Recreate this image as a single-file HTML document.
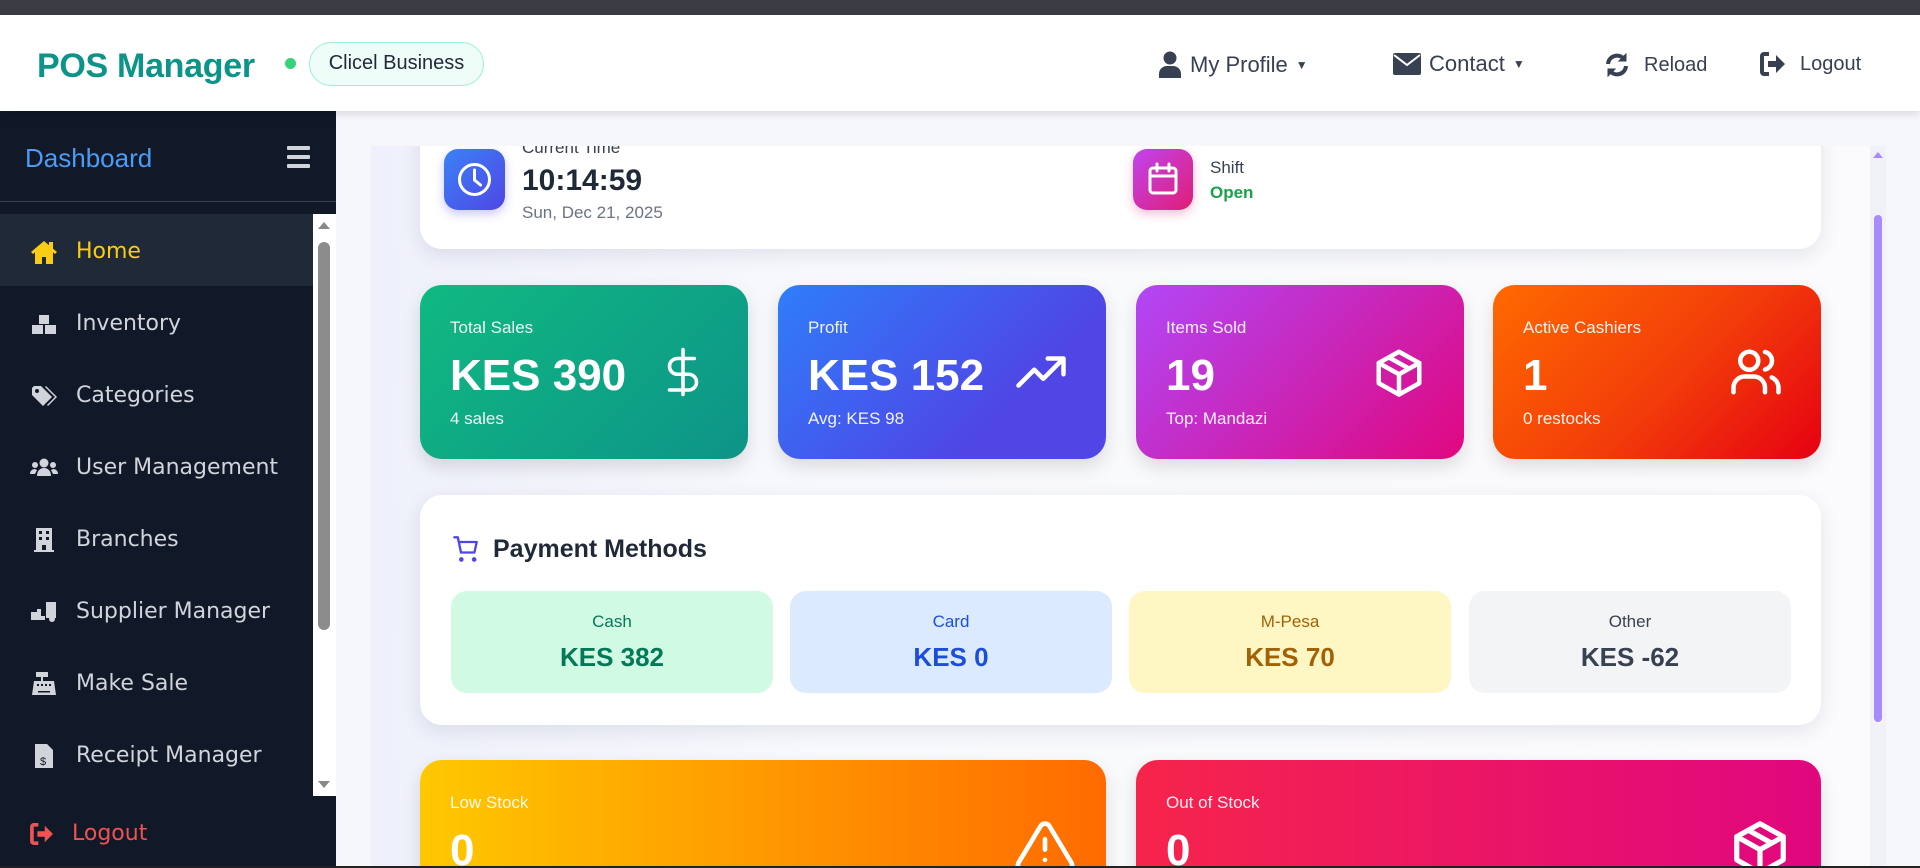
<!DOCTYPE html>
<html><head><meta charset="utf-8"><style>
*{box-sizing:border-box;margin:0;padding:0}
body{width:1920px;height:868px;overflow:hidden;background:#f6f7fb;font-family:"Liberation Sans",sans-serif;position:relative}
.abs{position:absolute}
.topbar{left:0;top:0;width:1920px;height:15px;background:#3a3b43}
.header{left:0;top:15px;width:1920px;height:96px;background:#fff;box-shadow:0 3px 8px rgba(0,0,0,.12);z-index:5}
.logo{left:37px;font-size:34px;font-weight:bold;color:#0d9488;letter-spacing:-.3px}
.dot{left:285px;width:11px;height:11px;border-radius:50%;background:#34d37a}
.badge{left:309px;width:175px;height:44px;border:1.5px solid #99f0dc;background:#effdf9;border-radius:22px;font-size:20px;color:#1f2937;text-align:center;line-height:41px}
.nav{font-size:22px;color:#374151;display:flex;align-items:center;gap:8px}
.side{left:0;top:111px;width:336px;height:757px;background:#111827}
.dash{left:25px;top:143px;font-size:26px;color:#4a9cf5}
.ham{left:287px;top:146px;width:23px}
.ham i{display:block;height:4px;background:#d1d5db;margin-bottom:5px;border-radius:1px}
.sline{left:0;top:201px;width:336px;height:1px;background:#374151}
.menu{left:0;top:214px;width:313px;height:582px;overflow:hidden}
.item{height:72px;display:flex;align-items:center;padding-left:30px;padding-top:3px;font-family:"DejaVu Sans",sans-serif;font-size:22px;color:#d1d5db}
.item svg{width:28px;height:28px;margin-right:18px;fill:#d1d5db}
.item.act{background:#1f2937;color:#facc15}
.item.act svg{fill:#facc15}
.sb{left:313px;top:214px;width:23px;height:582px;background:#fff}
.clip{left:371px;top:146px;width:1499px;height:720px;overflow:hidden;background:linear-gradient(90deg,#eef0fb,#f8f9fc 30%,#fbfbfd)}
.card{position:absolute;background:#fff;border-radius:22px;box-shadow:0 6px 20px rgba(30,40,80,.10)}
.stat{position:absolute;top:139px;width:328px;height:174px;border-radius:22px;color:#fff;box-shadow:0 8px 18px rgba(0,0,0,.12)}
.stat .l{position:absolute;left:30px;top:33px;font-size:17px;opacity:.92}
.stat .v{position:absolute;left:30px;top:66px;font-size:44px;font-weight:bold}
.stat .s{position:absolute;left:30px;top:124px;font-size:17px;opacity:.92}
.stat svg{position:absolute;right:38px;top:60px;width:54px;height:54px;fill:none;stroke:#fff;stroke-width:2;stroke-linecap:round;stroke-linejoin:round}
.pm{position:absolute;top:96px;width:322px;height:102px;border-radius:16px;text-align:center}
.pm .a{margin-top:21px;font-size:17px}
.pm .b{margin-top:10px;font-size:26px;font-weight:bold}
</style></head><body>
<div class="abs topbar"></div>
<div class="abs header">
 <div class="abs logo" style="top:32px">POS Manager</div>
 <div class="abs dot" style="top:43px"></div>
 <div class="abs badge" style="top:27px">Clicel Business</div>
 <div class="abs nav" style="left:1158px;top:36px"><svg width="24" height="28" viewBox="0 0 24 28"><circle cx="12" cy="7" r="6.5" fill="#374151"/><path d="M1 27v-4c0-5 4-8 8-8h6c4 0 8 3 8 8v4z" fill="#374151"/></svg><span>My Profile</span><span style="font-size:12px">▼</span></div>
 <div class="abs nav" style="left:1393px;top:36px"><svg width="28" height="22" viewBox="0 0 28 22"><rect x="0" y="0" width="28" height="22" rx="2" fill="#374151"/><path d="M1 2l13 10 13-10" stroke="#fff" stroke-width="2" fill="none"/></svg><span>Contact</span><span style="font-size:12px">▼</span></div>
 <div class="abs nav" style="left:1604px;top:37px;font-size:20px;gap:14px"><svg width="26" height="26" viewBox="0 0 26 26" fill="none" stroke="#374151" stroke-width="4"><path d="M4 12a9 9 0 0 1 16-5"/><path d="M22 14a9 9 0 0 1-16 5"/><path d="M22 2v7h-7z" fill="#374151" stroke-width="1"/><path d="M4 24v-7h7z" fill="#374151" stroke-width="1"/></svg><span>Reload</span></div>
 <div class="abs nav" style="left:1760px;top:37px;font-size:20px;gap:14px"><svg width="26" height="24" viewBox="0 0 26 24"><path d="M9 2H4a2 2 0 0 0-2 2v16a2 2 0 0 0 2 2h5" stroke="#374151" stroke-width="4" fill="none"/><path d="M8 9h8V3l9 9-9 9v-6H8z" fill="#374151"/></svg><span>Logout</span></div>
</div>

<div class="abs side"></div>
<div class="abs dash">Dashboard</div>
<div class="abs ham"><i></i><i></i><i></i></div>
<div class="abs sline"></div>
<div class="abs menu">
 <div class="item act"><svg viewBox="0 0 28 28"><path d="M14 3L1 14l2 2 2-1.6V26h7v-7h4v7h7V14.4l2 1.6 2-2-4-3.4V4h-4v3.2z"/></svg>Home</div>
 <div class="item"><svg viewBox="0 0 28 28"><rect x="9" y="5" width="10" height="9"/><rect x="2" y="15" width="11" height="9"/><rect x="15" y="15" width="11" height="9"/></svg>Inventory</div>
 <div class="item"><svg viewBox="0 0 28 28"><path d="M2 6v7l11 11 9-9L11 4H4z"/><path d="M16 4l11 11-9 9-1-1 8-8-10-10z"/><circle cx="7" cy="9" r="2" fill="#111827"/></svg>Categories</div>
 <div class="item"><svg viewBox="0 0 28 28"><circle cx="14" cy="9" r="4.5"/><circle cx="5" cy="11" r="3"/><circle cx="23" cy="11" r="3"/><path d="M7 22c0-5 3-8 7-8s7 3 7 8z"/><path d="M0 20c0-3 2-5 5-5l2 1-2 4z"/><path d="M28 20c0-3-2-5-5-5l-2 1 2 4z"/></svg>User Management</div>
 <div class="item"><svg viewBox="0 0 28 28"><path d="M6 2h16v22h2v2H4v-2h2z"/><g fill="#111827"><rect x="9" y="5" width="3" height="3"/><rect x="16" y="5" width="3" height="3"/><rect x="9" y="11" width="3" height="3"/><rect x="16" y="11" width="3" height="3"/><rect x="12" y="19" width="4" height="5"/></g></svg>Branches</div>
 <div class="item"><svg viewBox="0 0 28 28"><path d="M16 4h10v16h-10z"/><path d="M1 14h6v-3h4v7h4v4H1z"/><circle cx="22" cy="21" r="3"/></svg>Supplier Manager</div>
 <div class="item"><svg viewBox="0 0 28 28"><rect x="6" y="2" width="12" height="5"/><rect x="11" y="7" width="2" height="4"/><path d="M4 11h20l2 14H2z"/><g fill="#111827"><rect x="7" y="14" width="2" height="2"/><rect x="11" y="14" width="2" height="2"/><rect x="15" y="14" width="2" height="2"/><rect x="19" y="14" width="2" height="2"/><rect x="8" y="21" width="12" height="1.5"/></g></svg>Make Sale</div>
 <div class="item"><svg viewBox="0 0 28 28"><path d="M5 2h12l6 6v18H5z"/><text x="10" y="23" font-size="11" fill="#111827" font-family="Liberation Sans">$</text></svg>Receipt Manager</div>
</div>
<div class="abs sb"><div class="abs" style="left:5px;top:8px;border:6px solid transparent;border-bottom:7px solid #888;border-top:0"></div><div class="abs" style="left:5px;top:28px;width:12px;height:388px;background:#8c8c8c;border-radius:6px"></div><div class="abs" style="left:5px;bottom:8px;border:6px solid transparent;border-top:7px solid #888;border-bottom:0"></div></div>
<div class="abs" style="left:30px;top:821px;font-family:'DejaVu Sans',sans-serif;font-size:22px;color:#f05252;display:flex;align-items:center;gap:18px"><svg width="24" height="22" viewBox="0 0 26 24"><path d="M9 2H4a2 2 0 0 0-2 2v16a2 2 0 0 0 2 2h5" stroke="#f05252" stroke-width="4" fill="none"/><path d="M8 9h8V3l9 9-9 9v-6H8z" fill="#f05252"/></svg>Logout</div>

<div class="abs clip">
 <div class="card" style="left:49px;top:-40px;width:1401px;height:143px">
  <div class="abs" style="left:24px;top:43px;width:61px;height:61px;border-radius:14px;background:linear-gradient(135deg,#3b82f6,#4f46e5);box-shadow:0 4px 10px rgba(79,70,229,.3)"><svg width="61" height="61" viewBox="0 0 61 61" fill="none" stroke="#fff" stroke-width="3" stroke-linecap="round"><circle cx="30.5" cy="30.5" r="15"/><path d="M30.5 21v10l6 5"/></svg></div>
  <div class="abs" style="left:102px;top:32px;font-size:17px;color:#374151">Current Time</div>
  <div class="abs" style="left:102px;top:58px;font-size:30px;font-weight:bold;color:#1f2937">10:14:59</div>
  <div class="abs" style="left:102px;top:97px;font-size:17px;color:#6b7280">Sun, Dec 21, 2025</div>
  <div class="abs" style="left:713px;top:43px;width:60px;height:61px;border-radius:14px;background:linear-gradient(135deg,#c044f0,#e11d74);box-shadow:0 4px 10px rgba(219,39,119,.3)"><svg width="60" height="61" viewBox="0 0 60 61" fill="none" stroke="#fff" stroke-width="3" stroke-linecap="round"><rect x="17" y="19" width="26" height="25" rx="3"/><path d="M17 27h26M24 15v7M36 15v7"/></svg></div>
  <div class="abs" style="left:790px;top:52px;font-size:17px;color:#374151">Shift</div>
  <div class="abs" style="left:790px;top:77px;font-size:17px;font-weight:bold;color:#16a34a">Open</div>
 </div>

 <div class="stat" style="left:49px;background:linear-gradient(135deg,#10b981,#0d9488)"><div class="l">Total Sales</div><div class="v">KES 390</div><div class="s">4 sales</div><svg viewBox="0 0 24 24" style="stroke-width:1.6"><path d="M12 2v20M17 6H9.5a3.5 3.5 0 0 0 0 7h5a3.5 3.5 0 0 1 0 7H6"/></svg></div>
 <div class="stat" style="left:407px;background:linear-gradient(135deg,#2f7dfa,#4f46e5 70%)"><div class="l">Profit</div><div class="v">KES 152</div><div class="s">Avg: KES 98</div><svg viewBox="0 0 24 24"><path d="M2 18l7-7 4 4 9-9M15 6h7v7"/></svg></div>
 <div class="stat" style="left:765px;background:linear-gradient(135deg,#b147f7,#e0077f)"><div class="l">Items Sold</div><div class="v">19</div><div class="s">Top: Mandazi</div><svg viewBox="0 0 24 24"><path d="M21 8l-9-5-9 5v9l9 5 9-5z"/><path d="M3 8l9 5 9-5M12 13v9M7.5 5.5l9 5"/></svg></div>
 <div class="stat" style="left:1122px;background:linear-gradient(135deg,#ff6a00,#f23c0a 55%,#e60012)"><div class="l">Active Cashiers</div><div class="v">1</div><div class="s">0 restocks</div><svg viewBox="0 0 24 24"><circle cx="9" cy="7" r="4"/><path d="M2 21v-2a5 5 0 0 1 5-5h4a5 5 0 0 1 5 5v2M16 3.1a4 4 0 0 1 0 7.8M22 21v-2a5 5 0 0 0-3-4.6"/></svg></div>

 <div class="card" style="left:49px;top:349px;width:1401px;height:230px">
  <svg class="abs" style="left:32px;top:40px" width="28" height="28" viewBox="0 0 24 24" fill="none" stroke="#4f46e5" stroke-width="2" stroke-linecap="round" stroke-linejoin="round"><circle cx="8" cy="21" r="1"/><circle cx="19" cy="21" r="1"/><path d="M2 2h3l2.7 13h11.5l2-9H6"/></svg>
  <div class="abs" style="left:73px;top:40px;font-size:25px;font-weight:bold;color:#1f2937">Payment Methods</div>
  <div class="pm" style="left:31px;background:#d1fae5;color:#047857"><div class="a">Cash</div><div class="b">KES 382</div></div>
  <div class="pm" style="left:370px;background:#dbeafe;color:#1d4ed8"><div class="a">Card</div><div class="b">KES 0</div></div>
  <div class="pm" style="left:709px;background:#fef7c3;color:#a16207"><div class="a">M-Pesa</div><div class="b">KES 70</div></div>
  <div class="pm" style="left:1049px;background:#f3f4f6;color:#374151"><div class="a">Other</div><div class="b">KES -62</div></div>
 </div>

 <div class="stat" style="left:49px;top:614px;width:686px;height:200px;background:linear-gradient(90deg,#ffc800,#ff6a00)"><div class="l">Low Stock</div><div class="v">0</div><svg viewBox="0 0 24 24" style="top:56px;right:30px;width:62px;height:62px;stroke-width:1.8"><path d="M10.3 3.9L1.8 18a2 2 0 0 0 1.7 3h17a2 2 0 0 0 1.7-3L13.7 3.9a2 2 0 0 0-3.4 0zM12 9v4M12 17h.01"/></svg></div>
 <div class="stat" style="left:765px;top:614px;width:685px;height:200px;background:linear-gradient(90deg,#f6244b,#e0077f)"><div class="l">Out of Stock</div><div class="v">0</div><svg viewBox="0 0 24 24" style="top:56px;right:30px;width:62px;height:62px"><path d="M21 8l-9-5-9 5v9l9 5 9-5z"/><path d="M3 8l9 5 9-5M12 13v9M7.5 5.5l9 5"/></svg></div>
</div>
<div class="abs" style="left:1870px;top:146px;width:16px;height:720px;background:#f1f2f8"><div class="abs" style="left:3px;top:6px;border:5px solid transparent;border-bottom:6px solid #a78bfa;border-top:0"></div><div class="abs" style="left:4px;top:69px;width:8px;height:507px;background:#a78bfa;border-radius:4px"></div></div>
<div class="abs" style="left:0;top:866px;width:1920px;height:2px;background:#222"></div>
</body></html>
